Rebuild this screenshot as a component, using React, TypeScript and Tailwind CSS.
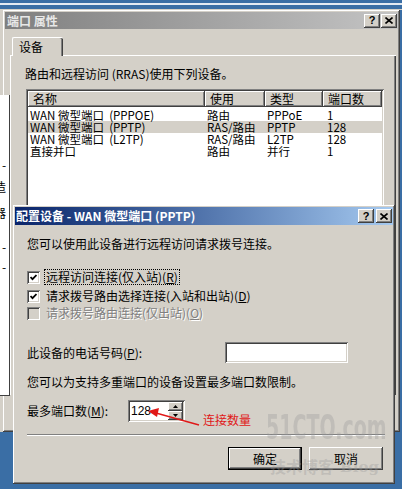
import type React from 'react';

const raised =
  'shadow-[inset_-1px_-1px_0_#404040,inset_1px_1px_0_#ffffff,inset_-2px_-2px_0_#808080,inset_2px_2px_0_#d4d0c8]';
const sunken =
  'shadow-[inset_1px_1px_0_#808080,inset_-1px_-1px_0_#ffffff,inset_2px_2px_0_#404040,inset_-2px_-2px_0_#d4d0c8]';

const columns = [
  { label: '名称', width: 'w-[177px]' },
  { label: '使用', width: 'w-[60px]' },
  { label: '类型', width: 'w-[58px]' },
  { label: '端口数', width: 'w-[59px]' },
];

const devices = [
  { name: 'WAN 微型端口  (PPPOE)', use: '路由', type: 'PPPoE', ports: '1' },
  { name: 'WAN 微型端口  (PPTP)', use: 'RAS/路由', type: 'PPTP', ports: '128', selected: true },
  { name: 'WAN 微型端口  (L2TP)', use: 'RAS/路由', type: 'L2TP', ports: '128' },
  { name: '直接并口', use: '路由', type: '并行', ports: '1' },
];

export default function App() {
  return (
    <div className="relative h-[489px] w-[402px] overflow-hidden bg-[#3a6ea5] font-['Noto_Sans_CJK_SC',sans-serif] text-[12px] leading-[12px] text-black">
      {/* window edges behind */}
      <div className="absolute left-0 top-[3px] h-[2px] w-full bg-[#e4eaf2]" />
      <div className="absolute left-0 top-[9px] h-px w-full bg-[#d4d0c8]" />
      <div className="absolute left-0 top-[9px] h-[423px] w-[3px] bg-[#d4d0c8]" />

      {/* 端口 属性 */}
      <div className={`absolute left-[3px] top-[10px] flex h-[422px] w-[397px] flex-col bg-[#d4d0c8] p-[2px] ${raised}`}>
        <div className="flex h-[17px] items-center bg-gradient-to-r from-[#808080] to-[#c4c4c4] pl-[2px] pr-px">
          <span className="font-bold text-[#e8e8e8]">端口 属性</span>
          <div className="ml-auto flex gap-px">
            <TitleButton kind="help" />
            <TitleButton kind="close" />
          </div>
        </div>

        <div className="relative z-10 ml-[7px] mt-[8px] -mb-px flex h-[19px] w-[51px] items-start rounded-tl-[2px] rounded-tr-[2px] border-l border-t border-white bg-[#d4d0c8] pl-[6px] pt-[3px] shadow-[inset_-1px_0_0_#404040,inset_-2px_0_0_#808080]">
          设备
        </div>

        <div className="ml-[5px] mr-[2px] flex h-[340px] flex-col border-l border-t border-white pl-[14px] pt-[12px] shadow-[inset_-1px_0_0_#404040,inset_-2px_0_0_#808080]">
          <p>路由和远程访问 (RRAS)使用下列设备。</p>
          <div className={`ml-px mt-[9px] h-[220px] w-[358px] bg-white p-[2px] ${sunken}`}>
            <div className="flex h-[16px]">
              {columns.map((col) => (
                <div key={col.label} className={`${col.width} flex items-center bg-[#d4d0c8] pl-[5px] ${raised}`}>
                  {col.label}
                </div>
              ))}
            </div>
            <div className="pt-[2px] text-[11.5px] leading-[12px]">
              {devices.map((row) => (
                <div key={row.name} className={`flex h-[12px] items-center whitespace-pre ${row.selected ? 'bg-[#d4d0c8]' : ''}`}>
                  <span className="w-[177px] pl-[2px]">{row.name}</span>
                  <span className="w-[60px] pl-[2px]">{row.use}</span>
                  <span className="w-[58px] pl-[2px]">{row.type}</span>
                  <span className="w-[59px] pl-[4px]">{row.ports}</span>
                </div>
              ))}
            </div>
          </div>
        </div>
      </div>

      {/* strip of another window on the left */}
      <div className="absolute left-0 top-[95px] h-[301px] w-[10px] overflow-hidden border-b border-r border-[#404040] bg-white">
        <span className="absolute left-[2px] top-[64px]">-</span>
        <span className="absolute left-[-6px] top-[86px]">造</span>
        <span className="absolute left-[-6px] top-[112px]">器</span>
        <span className="absolute left-[2px] top-[146px]">-</span>
        <span className="absolute left-[2px] top-[166px]">-</span>
      </div>

      {/* 配置设备 */}
      <div className={`absolute left-[13px] top-[205px] flex h-[279px] w-[382px] flex-col bg-[#d4d0c8] p-[2px] ${raised}`}>
        <div className="flex h-[18px] items-center bg-gradient-to-r from-[#0a246a] to-[#a6caf0] pl-px pr-px">
          <span className="whitespace-pre font-bold text-white">配置设备 - WAN 微型端口 (PPTP)</span>
          <div className="ml-auto flex gap-[2px]">
            <TitleButton kind="help" />
            <TitleButton kind="close" />
          </div>
        </div>

        <div className="flex flex-col pl-[12px] pr-[8px]">
          <p className="mt-[13px] h-[12px]">您可以使用此设备进行远程访问请求拨号连接。</p>

          <CheckRow className="mt-[19px]" checked focused>
            远程访问连接(仅入站)(<u>R</u>)
          </CheckRow>
          <CheckRow className="mt-[3px]" checked>
            请求拨号路由选择连接(入站和出站)(<u>D</u>)
          </CheckRow>
          <CheckRow className="mt-px" disabled>
            请求拨号路由连接(仅出站)(<u>O</u>)
          </CheckRow>

          <div className="mt-[21px] flex h-[21px] items-center">
            <span className="w-[198px]">
              此设备的电话号码(<u>P</u>):
            </span>
            <div className={`h-[21px] w-[123px] bg-white ${sunken}`} />
          </div>

          <p className="mt-[13px] h-[12px]">您可以为支持多重端口的设备设置最多端口数限制。</p>

          <div className="mt-[12px] flex h-[22px] items-center">
            <span className="w-[101px]">
              最多端口数(<u>M</u>):
            </span>
            <div className={`flex h-[22px] w-[57px] items-stretch bg-white p-[2px] ${sunken}`}>
              <span className="flex-1 pl-px pt-[3px] font-['Liberation_Sans',sans-serif] text-[12px]">128</span>
              <div className="flex w-[15px] flex-col">
                <SpinButton up />
                <SpinButton />
              </div>
            </div>
          </div>

          <div className="mt-[12px] h-[2px] border-b border-t border-b-white border-t-[#808080]" />

          <div className="mt-[11px] flex justify-end gap-[7px] pr-[2px]">
            <div className="flex h-[23px] w-[74px] items-center justify-center border border-black">
              <div className={`flex h-full w-full items-center justify-center ${raised}`}>确定</div>
            </div>
            <div className={`flex h-[23px] w-[74px] items-center justify-center ${raised}`}>取消</div>
          </div>
        </div>
      </div>

      {/* annotation */}
      <svg className="pointer-events-none absolute left-0 top-0" width="402" height="489">
        <path d="M199 425 L156 413" stroke="#e01818" strokeWidth="1.3" fill="none" />
        <path d="M148 411 L159 408 L157 417 Z" fill="#e01818" />
      </svg>
      <span className="absolute left-[203px] top-[413px] text-[12px] leading-[13px] text-[#e01818]">连接数量</span>

      {/* watermark */}
      <span className="pointer-events-none absolute left-[266px] top-[409px] origin-left scale-x-[0.56] whitespace-nowrap font-['DejaVu_Sans',sans-serif] text-[34px] font-bold leading-[36px] text-[#9a9a9a]/35">
        51CTO.com
      </span>
      <span className="pointer-events-none absolute left-[270px] top-[456px] text-[16px] font-bold leading-[20px] text-[#9a9a9a]/35">
        技术博客
      </span>
      <span className="pointer-events-none absolute left-[340px] top-[458px] font-['DejaVu_Serif',serif] text-[15px] font-bold leading-[18px] text-[#9a9a9a]/35">
        Blog
      </span>
    </div>
  );
}

function TitleButton({ kind }: { kind: 'help' | 'close' }) {
  return (
    <div className={`flex h-[14px] w-[16px] items-center justify-center bg-[#d4d0c8] ${raised}`}>
      {kind === 'help' ? (
        <span className="font-['Liberation_Sans',sans-serif] text-[11px] font-bold leading-[11px]">?</span>
      ) : (
        <svg width="8" height="7" viewBox="0 0 8 7">
          <path d="M0.5 0.5 L7.5 6.5 M7.5 0.5 L0.5 6.5" stroke="#000" strokeWidth="1.6" />
        </svg>
      )}
    </div>
  );
}

function CheckRow({
  className,
  checked,
  disabled,
  focused,
  children,
}: {
  className?: string;
  checked?: boolean;
  disabled?: boolean;
  focused?: boolean;
  children: React.ReactNode;
}) {
  return (
    <div className={`flex h-[16px] items-center ${className ?? ''}`}>
      <span
        className={`flex h-[13px] w-[13px] shrink-0 items-center justify-center ${sunken} ${disabled ? 'bg-[#d4d0c8]' : 'bg-white'}`}
      >
        {checked ? (
          <svg width="7" height="7" viewBox="0 0 7 7">
            <path d="M0.5 3 L2.5 5.2 L6.5 1" stroke="#000" strokeWidth="1.8" fill="none" />
          </svg>
        ) : null}
      </span>
      <span
        className={`ml-[4px] flex h-[16px] items-center px-px ${focused ? 'border border-dotted border-black' : 'border border-transparent'} ${disabled ? 'text-[#808080] [text-shadow:1px_1px_0_#ffffff]' : ''}`}
      >
        {children}
      </span>
    </div>
  );
}

function SpinButton({ up }: { up?: boolean }) {
  return (
    <div className={`flex flex-1 items-center justify-center bg-[#d4d0c8] ${raised}`}>
      <svg width="5" height="3" viewBox="0 0 5 3">
        <path d={up ? 'M2.5 0 L5 3 L0 3 Z' : 'M0 0 L5 0 L2.5 3 Z'} fill="#000" />
      </svg>
    </div>
  );
}
